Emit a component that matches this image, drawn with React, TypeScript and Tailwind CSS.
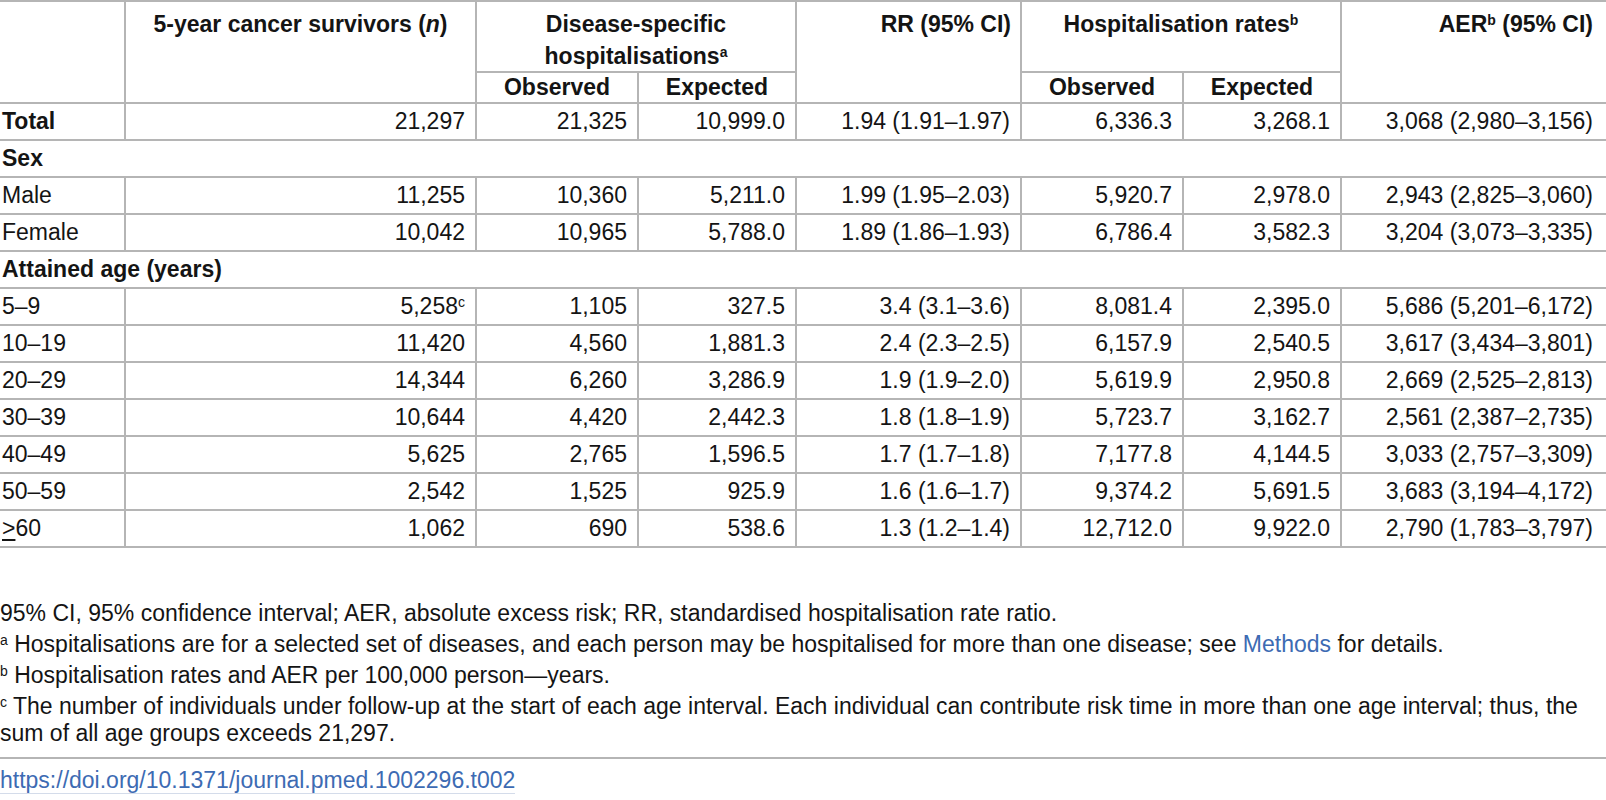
import React from "react";

const cols =
  "grid grid-cols-[124px_351px_162px_158px_225px_162px_158px_266px]";

type Row = {
  label: string;
  bold?: boolean;
  section?: boolean;
  values?: string[];
  note?: string;
  ge?: boolean;
};

const rows: Row[] = [
  {
    label: "Total",
    bold: true,
    values: ["21,297", "21,325", "10,999.0", "1.94 (1.91–1.97)", "6,336.3", "3,268.1", "3,068 (2,980–3,156)"],
  },
  { label: "Sex", section: true },
  {
    label: "Male",
    values: ["11,255", "10,360", "5,211.0", "1.99 (1.95–2.03)", "5,920.7", "2,978.0", "2,943 (2,825–3,060)"],
  },
  {
    label: "Female",
    values: ["10,042", "10,965", "5,788.0", "1.89 (1.86–1.93)", "6,786.4", "3,582.3", "3,204 (3,073–3,335)"],
  },
  { label: "Attained age (years)", section: true },
  {
    label: "5–9",
    note: "c",
    values: ["5,258", "1,105", "327.5", "3.4 (3.1–3.6)", "8,081.4", "2,395.0", "5,686 (5,201–6,172)"],
  },
  {
    label: "10–19",
    values: ["11,420", "4,560", "1,881.3", "2.4 (2.3–2.5)", "6,157.9", "2,540.5", "3,617 (3,434–3,801)"],
  },
  {
    label: "20–29",
    values: ["14,344", "6,260", "3,286.9", "1.9 (1.9–2.0)", "5,619.9", "2,950.8", "2,669 (2,525–2,813)"],
  },
  {
    label: "30–39",
    values: ["10,644", "4,420", "2,442.3", "1.8 (1.8–1.9)", "5,723.7", "3,162.7", "2,561 (2,387–2,735)"],
  },
  {
    label: "40–49",
    values: ["5,625", "2,765", "1,596.5", "1.7 (1.7–1.8)", "7,177.8", "4,144.5", "3,033 (2,757–3,309)"],
  },
  {
    label: "50–59",
    values: ["2,542", "1,525", "925.9", "1.6 (1.6–1.7)", "9,374.2", "5,691.5", "3,683 (3,194–4,172)"],
  },
  {
    label: "60",
    ge: true,
    values: ["1,062", "690", "538.6", "1.3 (1.2–1.4)", "12,712.0", "9,922.0", "2,790 (1,783–3,797)"],
  },
];

function Sup({ children }: { children: React.ReactNode }) {
  return <sup className="text-[14px] -top-[0.5em]">{children}</sup>;
}

function Header() {
  return (
    <div
      className={`${cols} grid-rows-[71px_29px] border-t-2 border-b-2 border-[#b5b5b5] font-bold`}
    >
      <div className="row-span-2" />
      <div className="row-span-2 border-l-2 border-[#b5b5b5] pt-[6px] text-center leading-[32px]">
        5-year cancer survivors (<i>n</i>)
      </div>
      <div className="col-span-2 border-l-2 border-b-2 border-[#b5b5b5] px-10 pt-[6px] text-center leading-[32px]">
        Disease-specific
        <br />
        hospitalisations<Sup>a</Sup>
      </div>
      <div className="row-span-2 border-l-2 border-[#b5b5b5] pt-[6px] pr-[9px] text-right leading-[32px]">
        RR (95% CI)
      </div>
      <div className="col-span-2 border-l-2 border-b-2 border-[#b5b5b5] pt-[6px] text-center leading-[32px]">
        Hospitalisation rates<Sup>b</Sup>
      </div>
      <div className="row-span-2 border-l-2 border-[#b5b5b5] pt-[6px] pr-[13px] text-right leading-[32px]">
        AER<Sup>b</Sup> (95% CI)
      </div>
      <div className="border-l-2 border-[#b5b5b5] flex items-center justify-center">Observed</div>
      <div className="border-l-2 border-[#b5b5b5] flex items-center justify-center">Expected</div>
      <div className="border-l-2 border-[#b5b5b5] flex items-center justify-center">Observed</div>
      <div className="border-l-2 border-[#b5b5b5] flex items-center justify-center">Expected</div>
    </div>
  );
}

function BodyRow({ row }: { row: Row }) {
  if (row.section) {
    return (
      <div className="h-[37px] border-b-2 border-[#b5b5b5] flex items-center pl-[2px] font-bold">
        {row.label}
      </div>
    );
  }
  return (
    <div className={`${cols} h-[37px] border-b-2 border-[#b5b5b5]`}>
      <div className={`flex items-center pl-[2px] ${row.bold ? "font-bold" : ""}`}>
        {row.ge ? (
          <span>
            <span className="underline underline-offset-[3px] decoration-[1.5px]">&gt;</span>
            {row.label}
          </span>
        ) : (
          row.label
        )}
      </div>
      {row.values!.map((v, i) => (
        <div
          key={i}
          className={`flex items-center justify-end border-l-2 border-[#b5b5b5] ${
            i === 6 ? "pr-[13px]" : "pr-[10px]"
          }`}
        >
          <span>
            {v}
            {i === 0 && row.note ? <Sup>{row.note}</Sup> : null}
          </span>
        </div>
      ))}
    </div>
  );
}

export default function App() {
  return (
    <div className="w-[1606px] h-[800px] overflow-hidden bg-white text-[#141414] font-['Liberation_Sans',Arial,sans-serif] text-[23px]">
      <Header />
      {rows.map((r, i) => (
        <BodyRow key={i} row={r} />
      ))}

      <div className="pt-[52px] leading-[27px] flex flex-col gap-[4px]">
        <p>95% CI, 95% confidence interval; AER, absolute excess risk; RR, standardised hospitalisation rate ratio.</p>
        <p>
          <Sup>a</Sup> Hospitalisations are for a selected set of diseases, and each person may be hospitalised for more
          than one disease; see <a className="text-[#3d6bb3]">Methods</a> for details.
        </p>
        <p>
          <Sup>b</Sup> Hospitalisation rates and AER per 100,000 person—years.
        </p>
        <p>
          <Sup>c</Sup> The number of individuals under follow-up at the start of each age interval. Each individual can
          contribute risk time in more than one age interval; thus, the
          <br />
          sum of all age groups exceeds 21,297.
        </p>
      </div>
      <div className="mt-[10px] border-t-2 border-[#b5b5b5]" />
      <div className="pt-[8px] leading-[27px]">
        <a className="text-[#3d6bb3] border-b border-[#d4dcea]">https://doi.org/10.1371/journal.pmed.1002296.t002</a>
      </div>
    </div>
  );
}
